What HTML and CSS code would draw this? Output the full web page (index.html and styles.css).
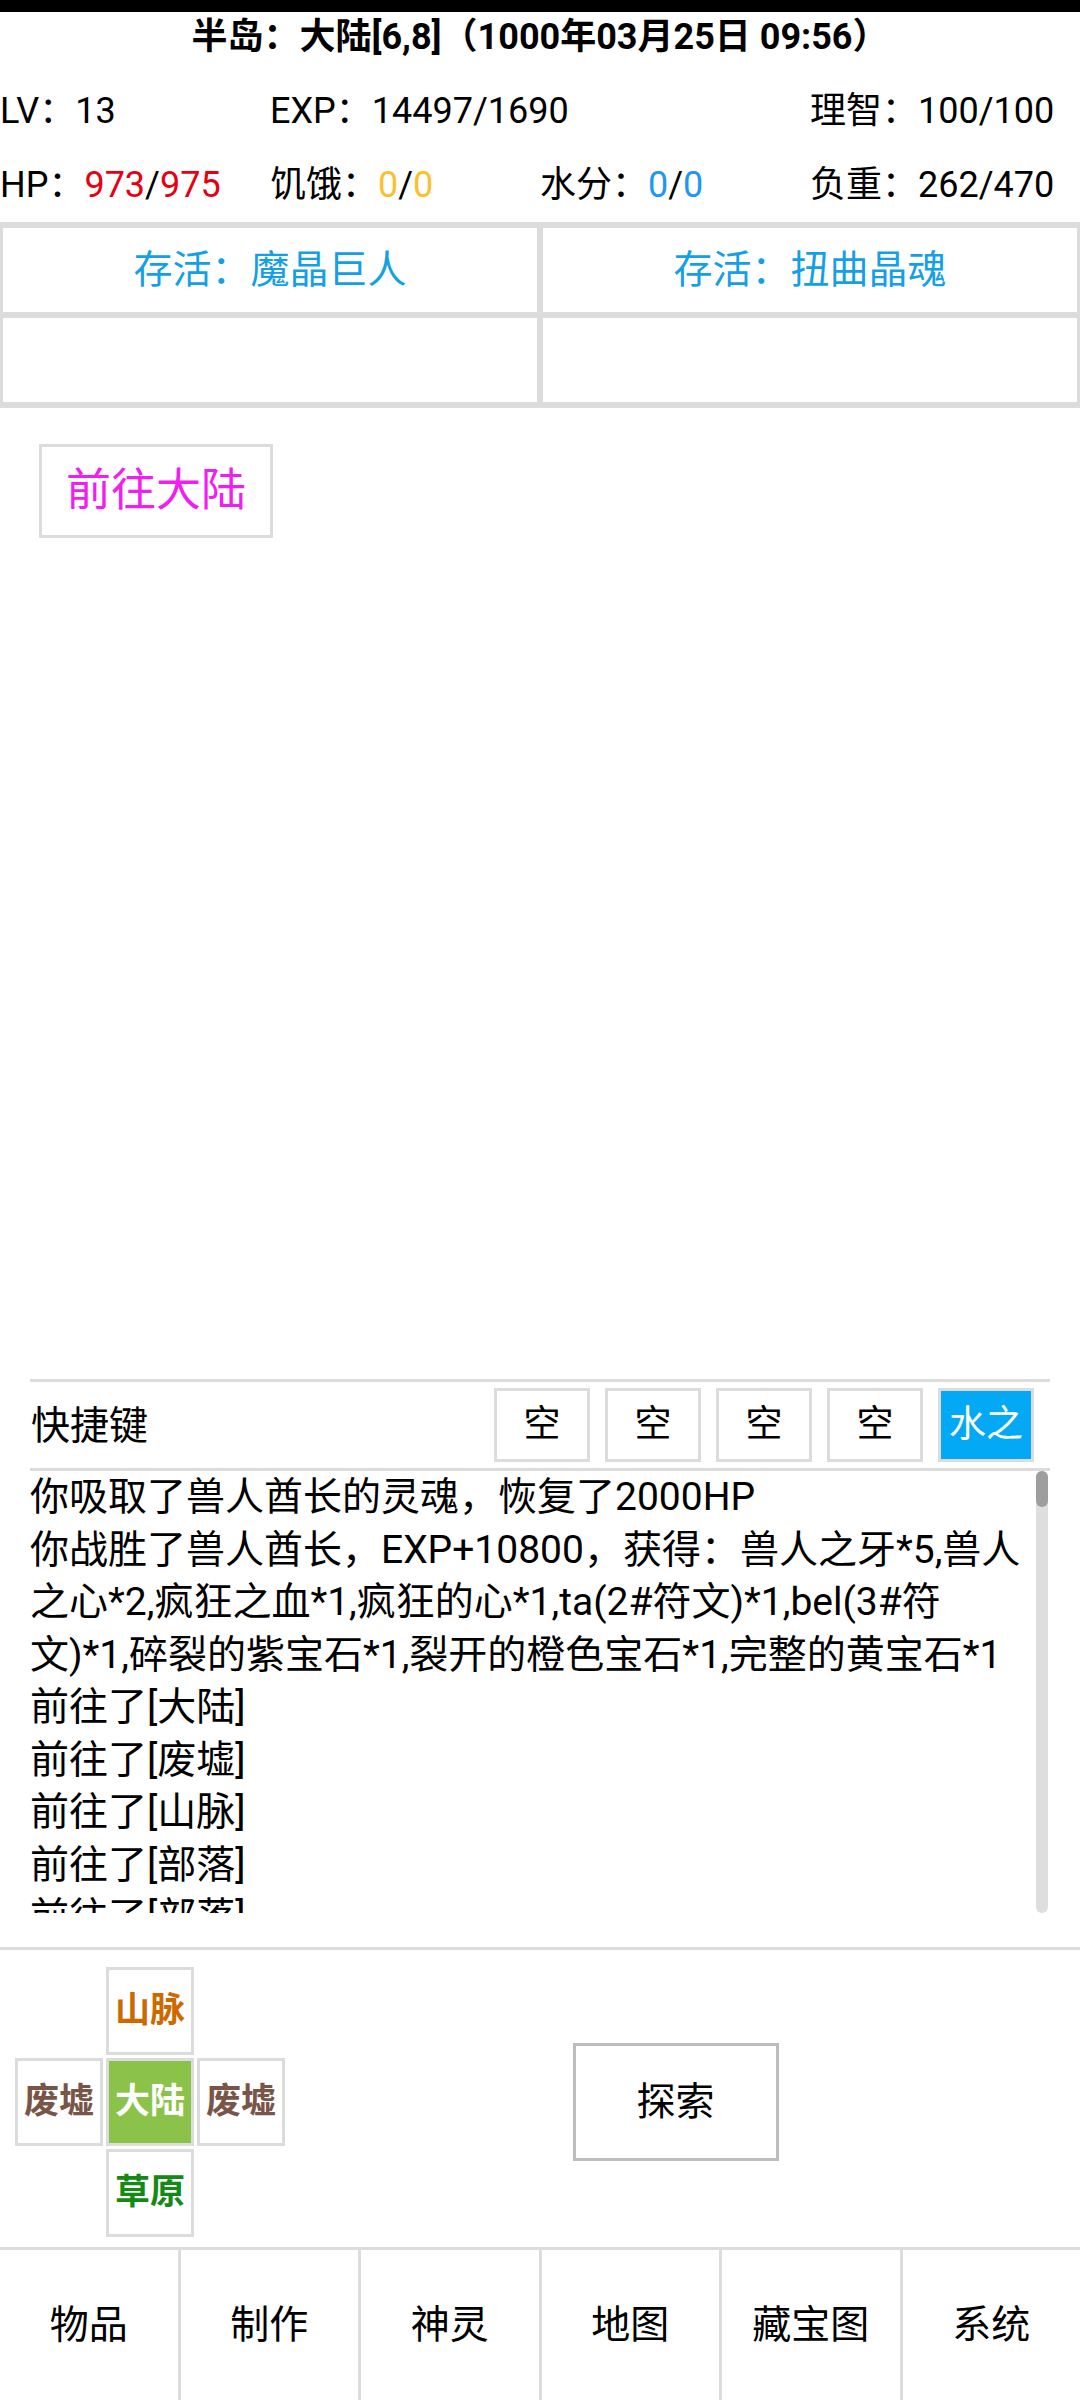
FILE: index.html
```html
<!DOCTYPE html>
<html lang="zh-CN">
<head>
  <meta charset="UTF-8">
  <meta name="viewport" content="width=device-width, initial-scale=1.0">
  <title>半岛</title>
  <link rel="stylesheet" href="styles.css">
</head>
<body>
  <div class="statusbar"></div>

  <h1 class="title">半岛：大陆[6,8]（1000年03月25日 09:56）</h1>

  <div class="stats">
    <div class="stat">LV：13</div>
    <div class="stat">EXP：14497/1690</div>
    <div class="stat"></div>
    <div class="stat">理智：100/100</div>
    <div class="stat">HP：<span class="hp">973</span>/<span class="hp">975</span></div>
    <div class="stat">饥饿：<span class="food">0</span>/<span class="food">0</span></div>
    <div class="stat">水分：<span class="water">0</span>/<span class="water">0</span></div>
    <div class="stat">负重：262/470</div>
  </div>

  <div class="quests">
    <div class="quest">存活：魔晶巨人</div>
    <div class="quest">存活：扭曲晶魂</div>
    <div class="quest"></div>
    <div class="quest"></div>
  </div>

  <div class="main">
    <div class="goto-button">前往大陆</div>
  </div>

  <div class="shortcuts">
    <span class="shortcut-label">快捷键</span>
    <div class="slots">
      <div class="slot">空</div>
      <div class="slot">空</div>
      <div class="slot">空</div>
      <div class="slot">空</div>
      <div class="slot slot-active">水之</div>
    </div>
  </div>

  <div class="log">
    <div class="log-text">
      <div>你吸取了兽人酋长的灵魂，恢复了2000HP</div>
      <div>你战胜了兽人酋长，EXP+10800，获得：兽人之牙*5,兽人之心*2,疯狂之血*1,疯狂的心*1,ta(2#符文)*1,bel(3#符文)*1,碎裂的紫宝石*1,裂开的橙色宝石*1,完整的黄宝石*1</div>
      <div>前往了[大陆]</div>
      <div>前往了[废墟]</div>
      <div>前往了[山脉]</div>
      <div>前往了[部落]</div>
      <div>前往了[部落]</div>
    </div>
    <div class="scrollbar"><div class="scroll-thumb"></div></div>
  </div>

  <div class="explore-area">
    <div class="map">
      <div></div>
      <div class="cell mountain">山脉</div>
      <div></div>
      <div class="cell ruins">废墟</div>
      <div class="cell here">大陆</div>
      <div class="cell ruins">废墟</div>
      <div></div>
      <div class="cell grass">草原</div>
      <div></div>
    </div>
    <div class="explore-wrap">
      <div class="explore-button">探索</div>
    </div>
  </div>

  <div class="tabs">
    <div class="tab">物品</div>
    <div class="tab">制作</div>
    <div class="tab">神灵</div>
    <div class="tab">地图</div>
    <div class="tab">藏宝图</div>
    <div class="tab">系统</div>
  </div>
</body>
</html>
```

FILE: styles.css
```css
body {
    margin: 0;
    height: 2400px;
    display: flex;
    flex-direction: column;
    background: #fff;
    color: #000;
    font-family: Roboto, "Noto Sans CJK SC", sans-serif;
    font-size: 39px;
}

.statusbar {
    height: 12px;
    background: #000;
}

.title {
    margin: 0;
    height: 50px;
    line-height: 50px;
    font-size: 36px;
    font-weight: bold;
    text-align: center;
    white-space: nowrap;
}

/* stats: four columns, text may run into the next empty one */
.stats {
    display: grid;
    grid-template-columns: repeat(4, 270px);
    grid-auto-rows: 74px;
    padding-top: 12px;
    font-size: 36px;
}

.stat {
    line-height: 74px;
    white-space: nowrap;
}

.hp { color: #e60012; }
.food { color: #fbc02d; }
.water { color: #2196f3; }

.quests {
    display: grid;
    grid-template-columns: 1fr 1fr;
    border-top: 3px solid #dcdcdc;
    border-bottom: 3px solid #dcdcdc;
}

.quest {
    height: 84px;
    line-height: 84px;
    border: 3px solid #dcdcdc;
    text-align: center;
    color: #14a0e6;
}

.main {
    flex: 1;
    padding: 36px 39px 0;
}

.goto-button {
    display: inline-block;
    box-sizing: border-box;
    width: 234px;
    height: 94px;
    line-height: 88px;
    border: 3px solid #dcdcdc;
    text-align: center;
    font-size: 45px;
    color: #f01ef0;
}

.shortcuts {
    display: flex;
    align-items: center;
    justify-content: space-between;
    margin: 0 30px;
    padding: 6px 16px 6px 0;
    border-top: 3px solid #dcdcdc;
    border-bottom: 3px solid #dcdcdc;
}

.shortcut-label {
    padding-left: 1px;
    margin-top: -6px;
}

.slots {
    display: flex;
    gap: 15px;
}

.slot {
    box-sizing: border-box;
    width: 96px;
    height: 74px;
    line-height: 68px;
    border: 3px solid #dcdcdc;
    text-align: center;
    font-size: 37px;
    overflow: hidden;
    white-space: nowrap;
}

.slot-active {
    background: #03a9f4;
    color: #fff;
}

.log {
    display: flex;
    height: 442px;
    margin: 0 30px;
    overflow: hidden;
}

.log-text {
    flex: 1;
    padding-right: 6px;
    line-height: 52.5px;
}

.scrollbar {
    width: 12px;
    margin-right: 2px;
    border-radius: 6px;
    background: #dedede;
}

.scroll-thumb {
    height: 36px;
    border-radius: 6px;
    background: #9e9e9e;
}

.explore-area {
    display: flex;
    align-items: center;
    margin-top: 34px;
    height: 291px;
    padding: 6px 0 0 15px;
    border-top: 3px solid #dcdcdc;
}

.map {
    display: grid;
    grid-template-columns: repeat(3, 88px);
    grid-auto-rows: 88px;
    gap: 3px;
}

.cell {
    box-sizing: border-box;
    border: 3px solid #dcdcdc;
    line-height: 82px;
    text-align: center;
    font-size: 35px;
    font-weight: bold;
    white-space: nowrap;
}

.mountain { color: #cc6a00; }
.ruins { color: #795548; }
.grass { color: #138a13; }

.here {
    background: #8bc34a;
    color: #fff;
}

.explore-wrap {
    flex: 1;
    display: flex;
    justify-content: center;
    padding-right: 14px;
}

.explore-button {
    box-sizing: border-box;
    width: 206px;
    height: 118px;
    line-height: 112px;
    border: 3px solid #bdbdbd;
    text-align: center;
}

.tabs {
    display: flex;
    height: 150px;
    border-top: 3px solid #dcdcdc;
}

.tab {
    flex: 1;
    line-height: 150px;
    text-align: center;
    border-left: 3px solid #dcdcdc;
}

.tab:first-child {
    border-left: none;
}
```
